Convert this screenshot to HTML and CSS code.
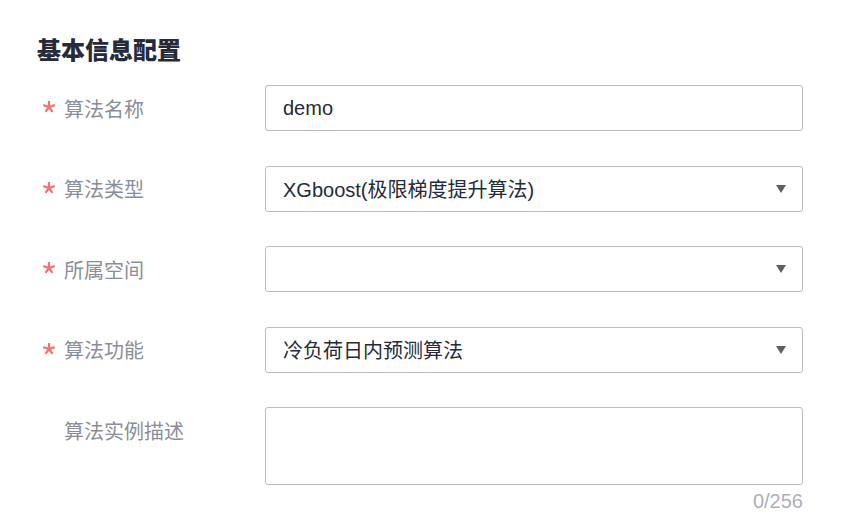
FILE: index.html
```html
<!DOCTYPE html>
<html lang="zh-CN">
<head>
<meta charset="utf-8">
<link rel="stylesheet" href="styles.css">
</head>
<body>
<div class="page">
  <h2 class="title">基本信息配置</h2>
  <div class="form">
    <div class="row">
      <div class="label"><svg class="req" viewBox="0 0 12 12" width="12" height="12"><g stroke="#f66f6a" stroke-width="2.2" stroke-linecap="butt"><line x1="6" y1="6" x2="6" y2="0"/><line x1="6" y1="6" x2="11.7" y2="4.1"/><line x1="6" y1="6" x2="9.5" y2="10.9"/><line x1="6" y1="6" x2="2.5" y2="10.9"/><line x1="6" y1="6" x2="0.3" y2="4.1"/></g></svg><span>算法名称</span></div>
      <div class="field"><div class="input">demo</div></div>
    </div>
    <div class="row">
      <div class="label"><svg class="req" viewBox="0 0 12 12" width="12" height="12"><g stroke="#f66f6a" stroke-width="2.2"><line x1="6" y1="6" x2="6" y2="0"/><line x1="6" y1="6" x2="11.7" y2="4.1"/><line x1="6" y1="6" x2="9.5" y2="10.9"/><line x1="6" y1="6" x2="2.5" y2="10.9"/><line x1="6" y1="6" x2="0.3" y2="4.1"/></g></svg><span>算法类型</span></div>
      <div class="field"><div class="input select"><span>XGboost(极限梯度提升算法)</span><i class="caret"></i></div></div>
    </div>
    <div class="row">
      <div class="label"><svg class="req" viewBox="0 0 12 12" width="12" height="12"><g stroke="#f66f6a" stroke-width="2.2"><line x1="6" y1="6" x2="6" y2="0"/><line x1="6" y1="6" x2="11.7" y2="4.1"/><line x1="6" y1="6" x2="9.5" y2="10.9"/><line x1="6" y1="6" x2="2.5" y2="10.9"/><line x1="6" y1="6" x2="0.3" y2="4.1"/></g></svg><span>所属空间</span></div>
      <div class="field"><div class="input select"><span></span><i class="caret"></i></div></div>
    </div>
    <div class="row">
      <div class="label"><svg class="req" viewBox="0 0 12 12" width="12" height="12"><g stroke="#f66f6a" stroke-width="2.2"><line x1="6" y1="6" x2="6" y2="0"/><line x1="6" y1="6" x2="11.7" y2="4.1"/><line x1="6" y1="6" x2="9.5" y2="10.9"/><line x1="6" y1="6" x2="2.5" y2="10.9"/><line x1="6" y1="6" x2="0.3" y2="4.1"/></g></svg><span>算法功能</span></div>
      <div class="field"><div class="input select"><span>冷负荷日内预测算法</span><i class="caret"></i></div></div>
    </div>
    <div class="row">
      <div class="label plain"><span>算法实例描述</span></div>
      <div class="field">
        <div class="textarea"></div>
        <div class="counter">0/256</div>
      </div>
    </div>
  </div>
</div>
</body>
</html>
```

FILE: styles.css
```css
html, body {
  margin: 0;
  padding: 0;
  background: #ffffff;
}
body {
  font-family: "Liberation Sans", "Noto Sans CJK SC", sans-serif;
  color: #252b3a;
}
.page {
  padding: 35px 0 0 37px;
}
.title {
  margin: 0 0 19px 0;
  font-size: 24px;
  line-height: 31px;
  font-weight: 900;
  color: #252b3a;
}
.form {
  display: flex;
  flex-direction: column;
  gap: 34.5px;
  padding-left: 5px;
}
.row {
  display: flex;
  align-items: flex-start;
}
.label {
  width: 223px;
  flex: 0 0 223px;
  display: flex;
  align-items: center;
  height: 46px;
  font-size: 20px;
  color: #8a8e99;
}
.label .req {
  margin: 0 9px 0 1px;
  position: relative;
  top: -1px;
}
.label.plain span {
  margin-left: 22px;
}
.field {
  width: 538px;
  display: flex;
  flex-direction: column;
}
.input {
  box-sizing: border-box;
  height: 46px;
  border: 1px solid #b9bcc3;
  border-radius: 3px;
  padding: 0 16px 0 17px;
  display: flex;
  align-items: center;
  font-size: 20px;
  color: #252b3a;
}
.select {
  justify-content: space-between;
}
.caret {
  width: 0;
  height: 0;
  border-left: 5.5px solid transparent;
  border-right: 5.5px solid transparent;
  border-top: 8px solid #5e6066;
}
.textarea {
  box-sizing: border-box;
  height: 78px;
  border: 1px solid #b9bcc3;
  border-radius: 3px;
}
.counter {
  text-align: right;
  font-size: 20px;
  line-height: 30px;
  margin-top: 1px;
  color: #adb0b8;
}
```
